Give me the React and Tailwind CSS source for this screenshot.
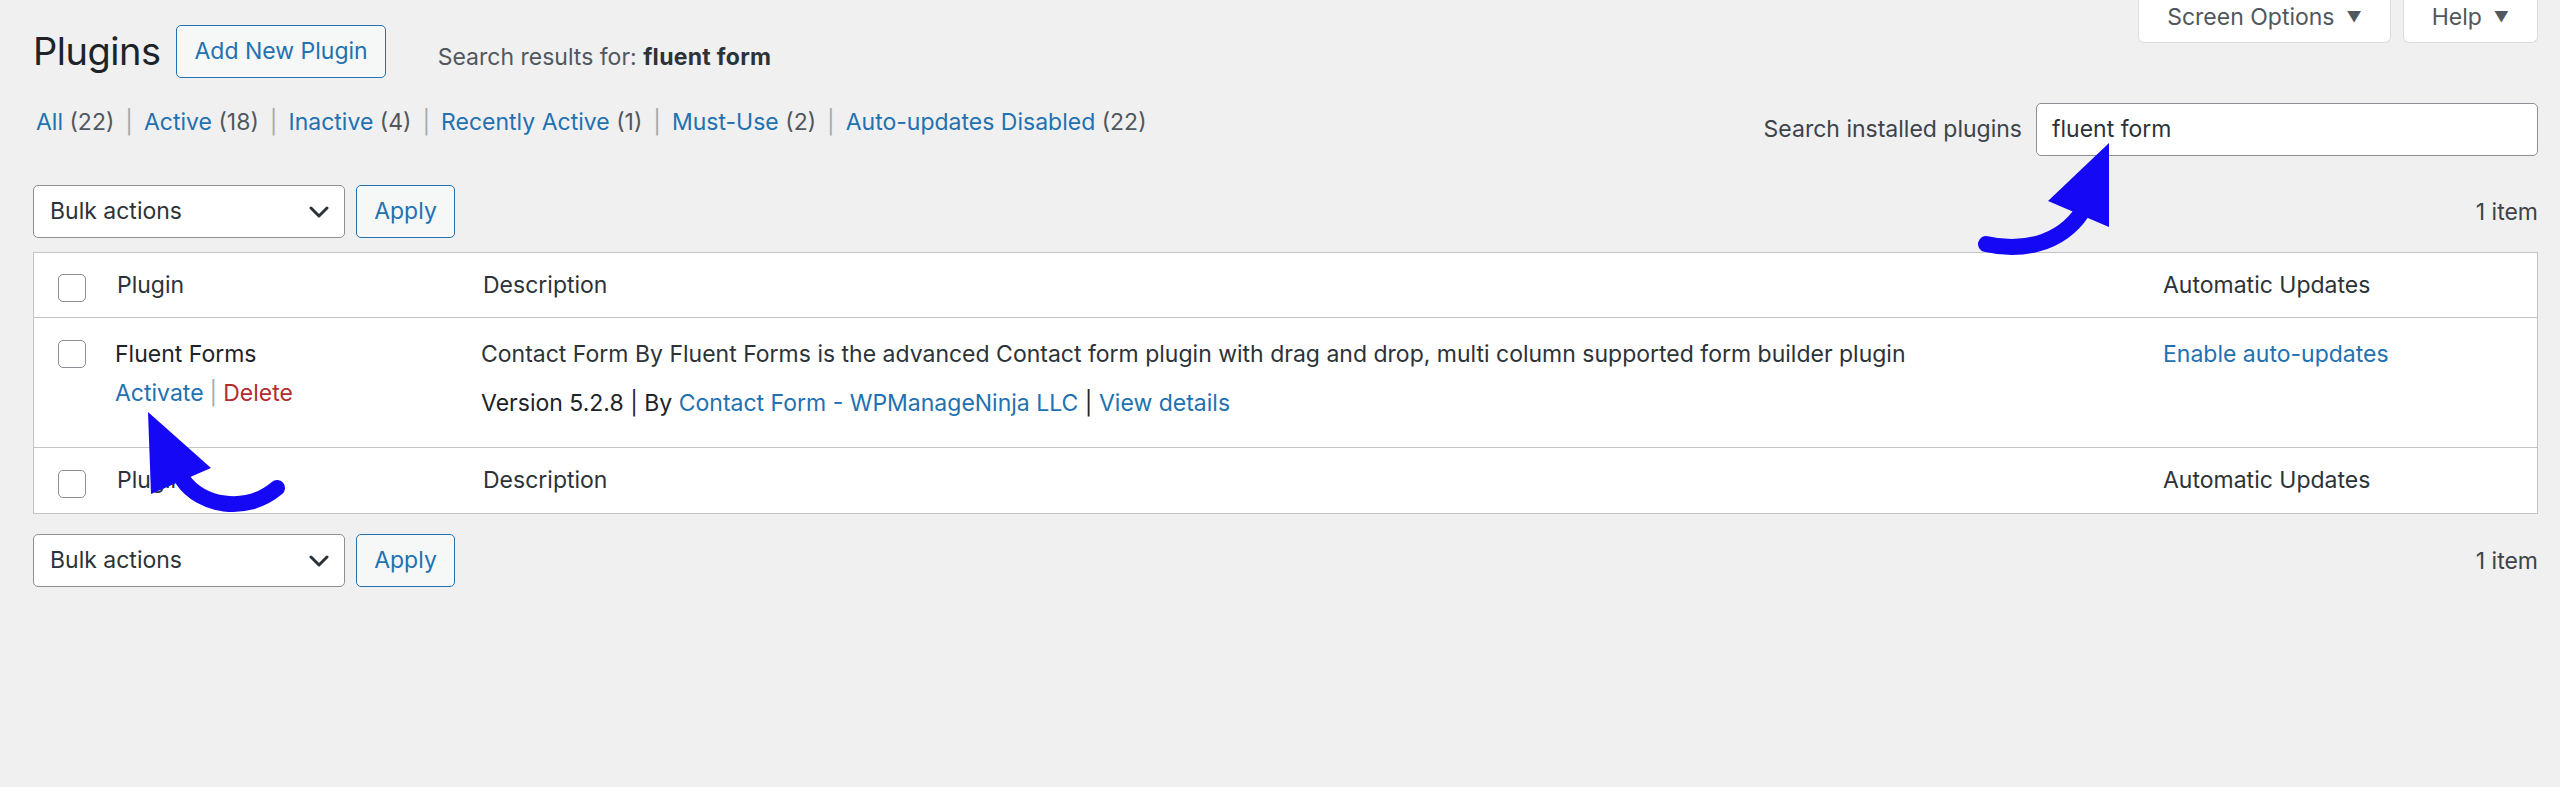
import React from "react";

const font = { fontFamily: "Inter, 'Liberation Sans', Arial, sans-serif" };

function Checkbox() {
  return <div className="w-[28px] h-[28px] rounded-[5px] border border-[#8c8f94] bg-white" />;
}

function Chevron() {
  return (
    <svg width="20" height="12" viewBox="0 0 20 12" fill="none">
      <path d="M2 2 L10 10 L18 2" stroke="#2c3338" strokeWidth="3" strokeLinecap="round" strokeLinejoin="round" />
    </svg>
  );
}

function TableNav() {
  return (
    <div className="flex items-center justify-between h-[53px]">
      <div className="flex items-center gap-[11px]">
        <div className="w-[312px] h-[53px] rounded-[5px] border border-[#8c8f94] bg-white flex items-center justify-between pl-[16px] pr-[15px] text-[23px] text-[#2c3338]">
          <span>Bulk actions</span>
          <Chevron />
        </div>
        <div className="w-[99px] h-[53px] rounded-[5px] border border-[#2271b1] bg-[#f6f7f7] flex items-center justify-center text-[23px] text-[#2271b1]">
          Apply
        </div>
      </div>
      <div className="text-[23px] text-[#3c434a] pt-[2px]">1 item</div>
    </div>
  );
}

function HeadRow({ top }) {
  return (
    <div className={"flex items-center h-[65px] text-[23px] text-[#2c3338] " + (top ? "border-b border-[#c3c4c7]" : "")}>
      <div className="w-[71px] pl-[24px] flex items-center pt-[6px]"><Checkbox /></div>
      <div className="w-[366px] pl-[12px]">Plugin</div>
      <div className="w-[1680px] pl-[12px]">Description</div>
      <div className="flex-1 pl-[12px]">Automatic Updates</div>
    </div>
  );
}

function Sep() {
  return <span className="text-[#a7aaad] mx-[11px]">|</span>;
}

export default function App() {
  const links = [
    ["All", "(22)"],
    ["Active", "(18)"],
    ["Inactive", "(4)"],
    ["Recently Active", "(1)"],
    ["Must-Use", "(2)"],
    ["Auto-updates Disabled", "(22)"],
  ];
  return (
    <div className="relative w-[2560px] min-h-[787px] bg-[#f0f0f1] overflow-hidden" style={font}>
      <div className="pl-[33px] pr-[22px]">
        {/* header row */}
        <div className="flex justify-between items-start h-[78px]">
          <div className="flex items-center pt-[25px] h-[78px]">
            <h1 className="text-[38px] leading-none text-[#1d2327] mr-[16px] -mt-[1px] tracking-[-0.5px]">Plugins</h1>
            <div className="h-[53px] px-[17px] rounded-[5px] border border-[#2271b1] bg-[#f6f7f7] text-[#2271b1] text-[23px] flex items-center">
              Add New Plugin
            </div>
            <div className="ml-[52px] mt-[12px] text-[23px] text-[#50575e]">
              Search results for: <span className="font-bold tracking-[0.3px] text-[#2c3338]">fluent form</span>
            </div>
          </div>
          <div className="flex items-start gap-[12px]">
            <div className="h-[43px] pb-[8px] px-[28px] bg-white border border-t-0 border-[#dcdcde] rounded-b-[6px] flex items-center text-[23px] text-[#50575e]">
              Screen Options<span className="ml-[12px] text-[15px]">▼</span>
            </div>
            <div className="h-[43px] pb-[8px] px-[28px] bg-white border border-t-0 border-[#dcdcde] rounded-b-[6px] flex items-center text-[23px] text-[#50575e]">
              Help<span className="ml-[12px] text-[15px]">▼</span>
            </div>
          </div>
        </div>

        {/* status links + search */}
        <div className="flex justify-between items-start mt-[25px] h-[53px]">
          <div className="text-[23px] pl-[3px] pt-[2px]">
            {links.map(([l, c], i) => (
              <span key={l}>
                {i > 0 && <Sep />}
                <span className="text-[#2271b1]">{l}</span>{" "}
                <span className="text-[#50575e]">{c}</span>
              </span>
            ))}
          </div>
          <div className="flex items-center gap-[14px]">
            <span className="text-[23px] text-[#3c434a]">Search installed plugins</span>
            <div className="w-[502px] h-[53px] rounded-[5px] border border-[#8c8f94] bg-white flex items-center pl-[15px] text-[23px] text-[#2c3338]">
              fluent form
            </div>
          </div>
        </div>

        {/* top tablenav */}
        <div className="mt-[29px]">
          <TableNav />
        </div>

        {/* table */}
        <div className="mt-[14px] bg-white border border-[#c3c4c7]">
          <HeadRow top />
          <div className="flex h-[130px] border-b border-[#c3c4c7] text-[23px]">
            <div className="w-[71px] pl-[24px] pt-[22px]"><Checkbox /></div>
            <div className="w-[366px] pl-[10px] pt-[21px]">
              <div className="text-[#1d2327] leading-[30px]">Fluent Forms</div>
              <div className="mt-[10px] leading-[28px]">
                <span className="text-[#2271b1]">Activate</span>
                <span className="text-[#a7aaad] mx-[6px]">|</span>
                <span className="text-[#b32d2e]">Delete</span>
              </div>
            </div>
            <div className="w-[1680px] pl-[10px] pt-[21px] text-[#2c3338]">
              <div className="leading-[30px]">
                Contact Form By Fluent Forms is the advanced Contact form plugin with drag and drop, multi column supported form builder plugin
              </div>
              <div className="mt-[19px] leading-[30px] text-[#1d2327]">
                Version 5.2.8 | By <span className="text-[#2271b1]">Contact Form - WPManageNinja LLC</span> | <span className="text-[#2271b1]">View details</span>
              </div>
            </div>
            <div className="flex-1 pl-[12px] pt-[21px] leading-[30px] text-[#2271b1]">Enable auto-updates</div>
          </div>
          <HeadRow />
        </div>

        {/* bottom tablenav */}
        <div className="mt-[20px]">
          <TableNav />
        </div>
      </div>

      {/* annotation arrows */}
      <svg className="absolute inset-0 pointer-events-none" width="2560" height="787" viewBox="0 0 2560 787">
        <g fill="#1508f5" stroke="#1508f5">
          <polygon points="2109,143 2048,201 2109,227" stroke="none" />
          <path d="M1986 244 C2020 252 2060 245 2082 212" fill="none" strokeWidth="16" strokeLinecap="round" />
          <polygon points="148,412 211,468 151,494" stroke="none" />
          <path d="M183 480 C200 505 245 515 277 488" fill="none" strokeWidth="16" strokeLinecap="round" />
        </g>
      </svg>
    </div>
  );
}
